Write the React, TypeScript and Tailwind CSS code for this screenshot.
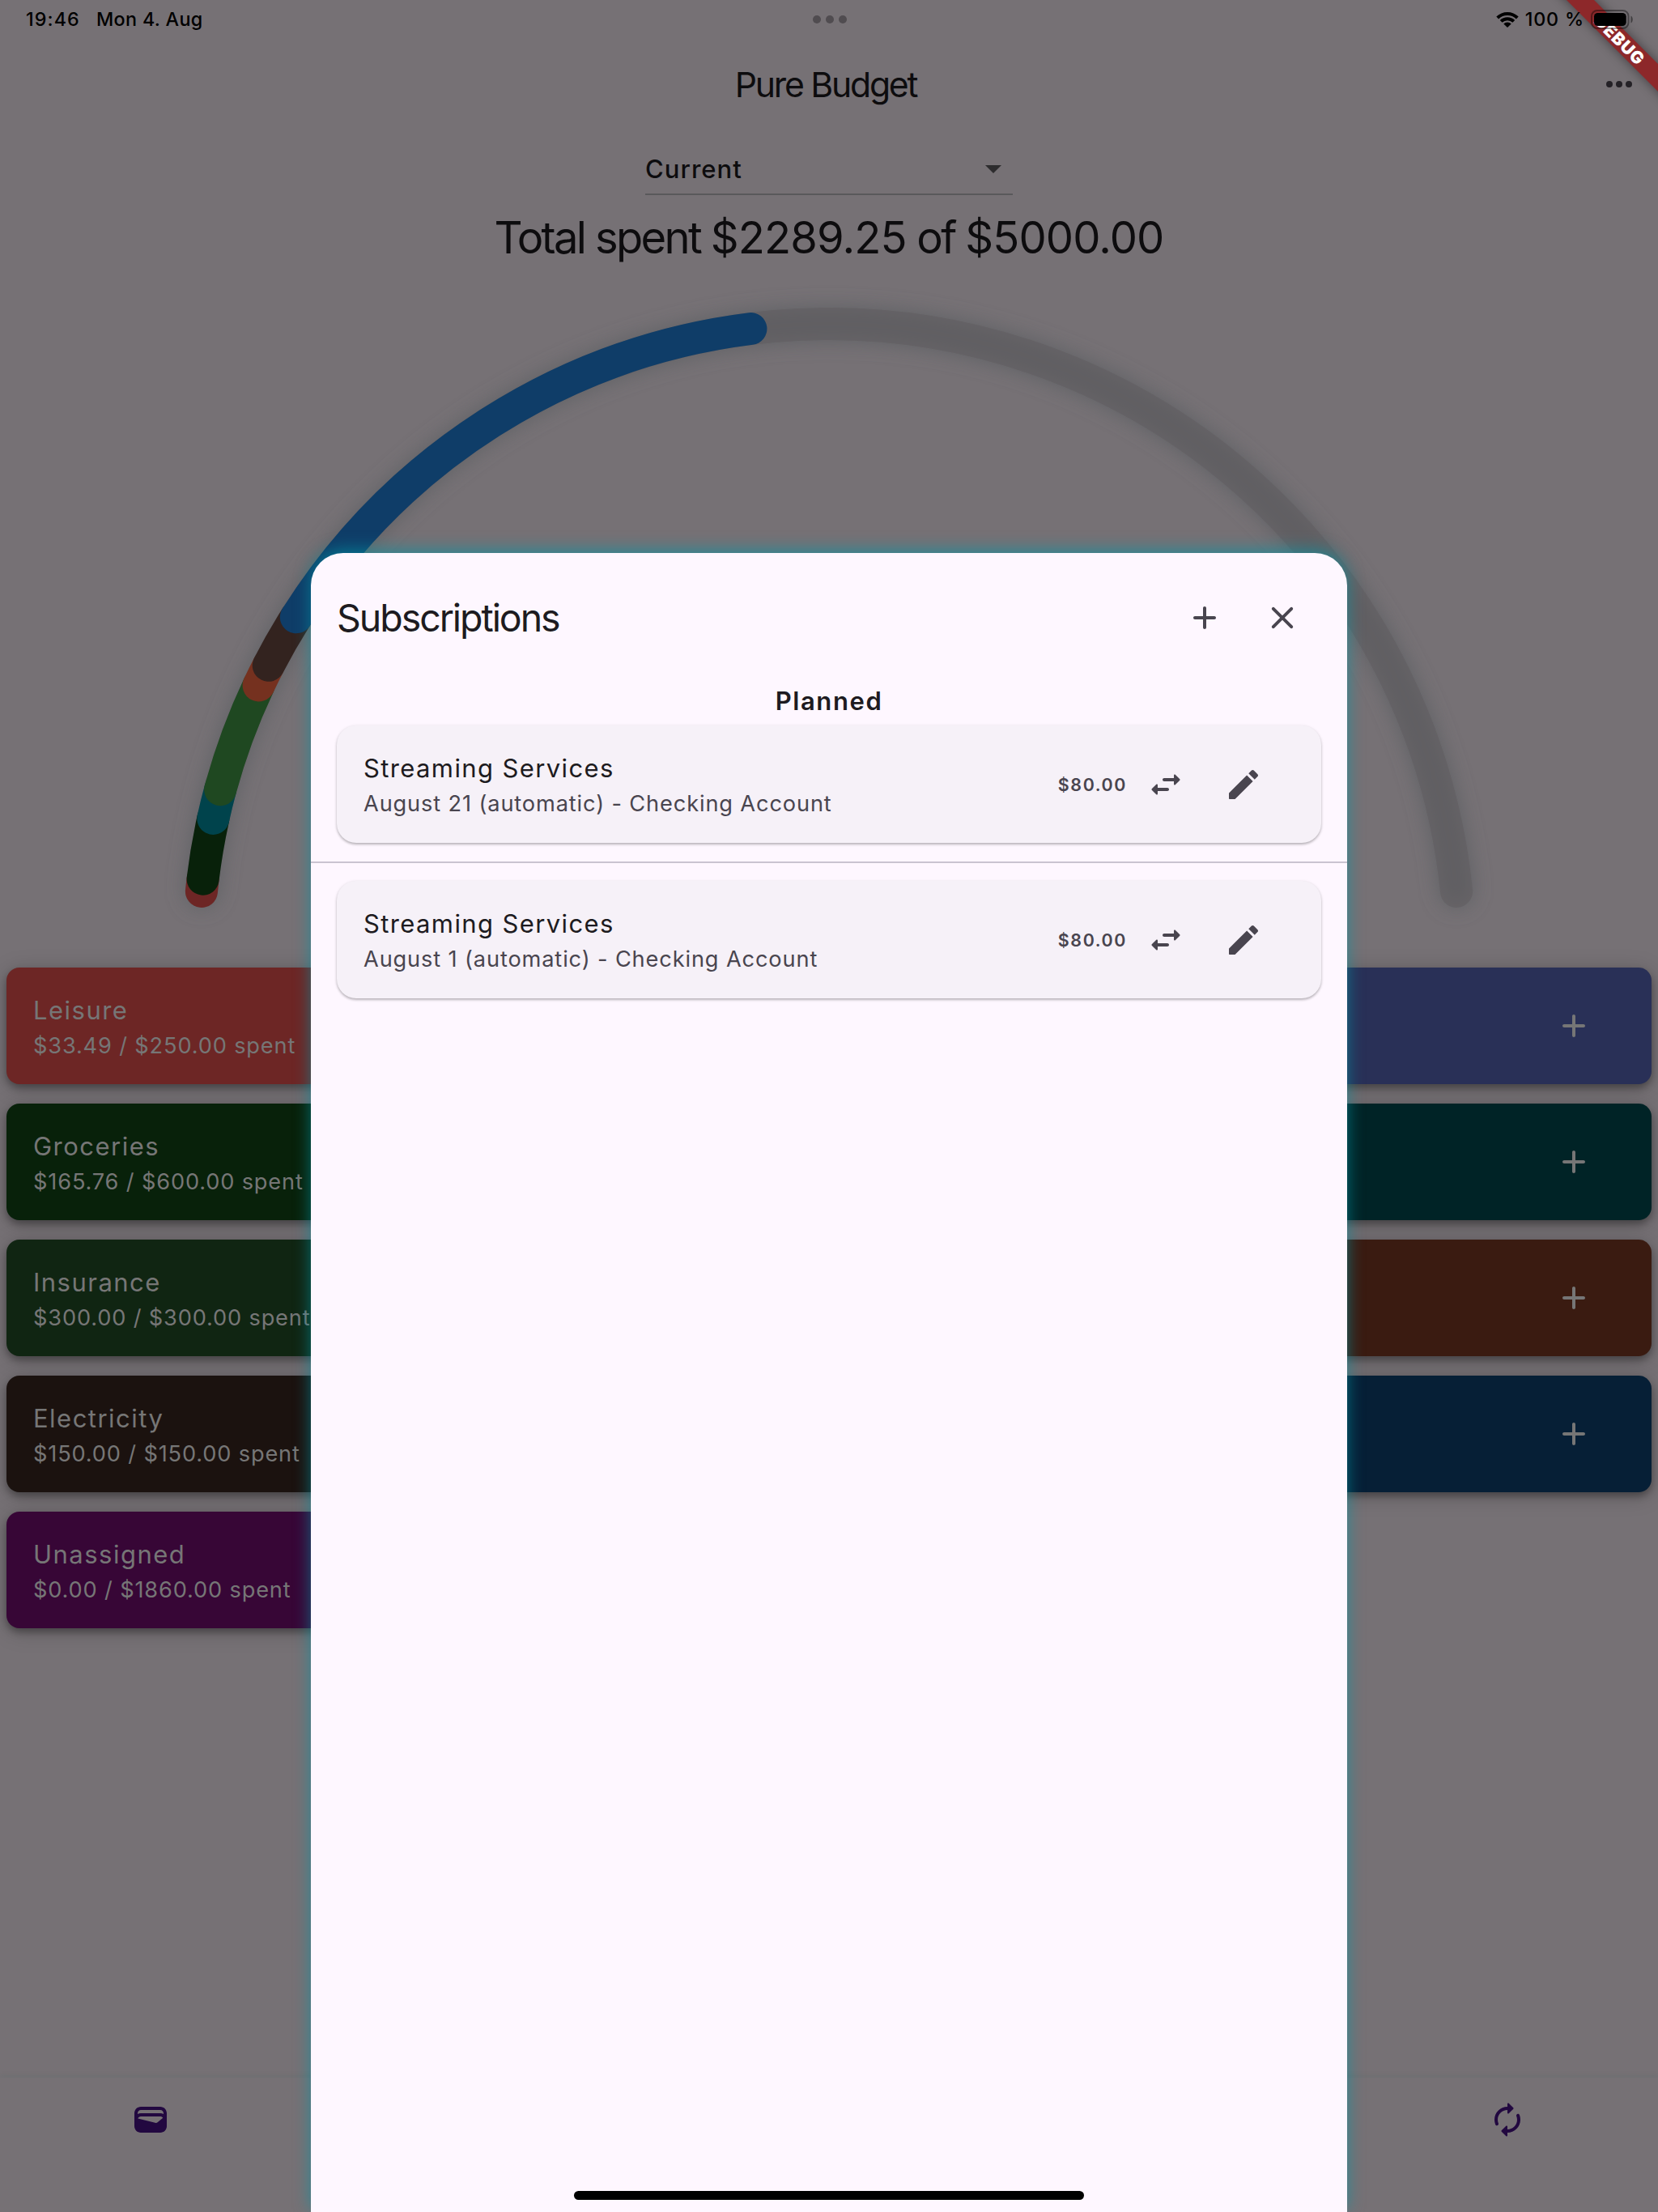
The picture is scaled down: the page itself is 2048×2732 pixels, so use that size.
import type { ReactNode } from "react";

const CX = 1024;
const CY = 1179;
const R = 779;

function polar(deg: number) {
  const a = (deg * Math.PI) / 180;
  return `${(CX - R * Math.cos(a)).toFixed(2)} ${(CY - R * Math.sin(a)).toFixed(2)}`;
}

function arc(from: number, to: number) {
  return `M${polar(from)} A${R} ${R} 0 0 1 ${polar(to)}`;
}

const segments = [
  { from: 5.75, to: 6.88, color: "#6d2625" },
  { from: 6.88, to: 12.46, color: "#08210a" },
  { from: 12.46, to: 15.16, color: "#00434c" },
  { from: 15.16, to: 25.27, color: "#1f4821" },
  { from: 25.27, to: 27.29, color: "#75311f" },
  { from: 27.29, to: 32.34, color: "#33231f" },
  { from: 32.34, to: 82.88, color: "#0f3d68" },
];

const budgets = [
  { name: "Leisure", detail: "$33.49 / $250.00 spent", bg: "bg-[#6d2625]" },
  { name: "", detail: "", bg: "bg-[#293057]" },
  { name: "Groceries", detail: "$165.76 / $600.00 spent", bg: "bg-[#08210a]" },
  { name: "", detail: "", bg: "bg-[#002326]" },
  { name: "Insurance", detail: "$300.00 / $300.00 spent", bg: "bg-[#102512]" },
  { name: "", detail: "", bg: "bg-[#3a1b11]" },
  { name: "Electricity", detail: "$150.00 / $150.00 spent", bg: "bg-[#1b120f]" },
  { name: "", detail: "", bg: "bg-[#061f36]" },
  { name: "Unassigned", detail: "$0.00 / $1860.00 spent", bg: "bg-[#370636]" },
];

const subscriptions = [
  { name: "Streaming Services", detail: "August 21 (automatic) - Checking Account", amount: "$80.00" },
  { name: "Streaming Services", detail: "August 1 (automatic) - Checking Account", amount: "$80.00" },
];

function Icon({ d, className = "" }: { d: string; className?: string }) {
  return (
    <svg viewBox="0 0 24 24" className={`size-12 shrink-0 fill-current ${className}`}>
      <path d={d} />
    </svg>
  );
}

function IconButton({ children }: { children: ReactNode }) {
  return <button className="flex size-24 shrink-0 items-center justify-center">{children}</button>;
}

const ADD =
  "M18 13h-5v5c0 .55-.45 1-1 1s-1-.45-1-1v-5H6c-.55 0-1-.45-1-1s.45-1 1-1h5V6c0-.55.45-1 1-1s1 .45 1 1v5h5c.55 0 1 .45 1 1s-.45 1-1 1z";
const CLOSE =
  "M18.3 5.71c-.39-.39-1.02-.39-1.41 0L12 10.59 7.11 5.7c-.39-.39-1.02-.39-1.41 0-.39.39-.39 1.02 0 1.41L10.59 12 5.7 16.89c-.39.39-.39 1.02 0 1.41.39.39 1.02.39 1.41 0L12 13.41l4.89 4.89c.39.39 1.02.39 1.41 0 .39-.39.39-1.02 0-1.41L13.41 12l4.89-4.89c.38-.38.38-1.02 0-1.4z";
const SWAP =
  "M6.14 11.86l-2.78 2.79c-.19.2-.19.51 0 .71l2.78 2.79c.31.32.85.09.85-.35V16H13c.55 0 1-.45 1-1s-.45-1-1-1H6.99v-1.79c0-.45-.54-.67-.85-.35zm14.51-3.21l-2.78-2.79c-.31-.32-.85-.09-.85.35V8H11c-.55 0-1 .45-1 1s.45 1 1 1h6.01v1.79c0 .45.54.67.85.35l2.78-2.79c.2-.19.2-.51.01-.7z";
const EDIT =
  "M3 17.46v3.04c0 .28.22.5.5.5h3.04c.13 0 .26-.05.35-.15L17.81 9.94l-3.75-3.75L3.15 17.1c-.1.1-.15.22-.15.36zM20.71 7.04c.39-.39.39-1.02 0-1.41l-2.34-2.34c-.39-.39-1.02-.39-1.41 0l-1.83 1.83 3.75 3.75 1.83-1.83z";
const RENEW =
  "M12 6v1.79c0 .45.54.67.85.35l2.79-2.79c.2-.2.2-.51 0-.71l-2.79-2.79c-.31-.31-.85-.09-.85.36V4c-4.42 0-8 3.58-8 8 0 1.04.2 2.04.57 2.95.27.67 1.13.85 1.64.34.27-.27.38-.68.23-1.04C6.15 13.56 6 12.79 6 12c0-3.31 2.69-6 6-6zm5.79 2.71c-.27.27-.38.69-.23 1.04.28.7.44 1.46.44 2.25 0 3.31-2.69 6-6 6v-1.79c0-.45-.54-.67-.85-.35l-2.79 2.79c-.2.2-.2.51 0 .71l2.79 2.79c.31.31.85.09.85-.35V20c4.42 0 8-3.58 8-8 0-1.04-.2-2.04-.57-2.95-.27-.67-1.13-.85-1.64-.34z";
const WALLET =
  "M18 4H6C3.79 4 2 5.79 2 8v8c0 2.21 1.79 4 4 4h12c2.21 0 4-1.79 4-4V8c0-2.21-1.79-4-4-4zm-1.86 9.77c-.24.2-.57.28-.88.2L4.15 11.25C4.45 10.52 5.16 10 6 10h12c.67 0 1.26.34 1.63.84l-3.49 2.93zM6 6h12c1.1 0 2 .9 2 2v.55c-.59-.34-1.27-.55-2-.55H6c-.73 0-1.41.21-2 .55V8c0-1.1.9-2 2-2z";

function StatusBar() {
  return (
    <div className="relative z-20 flex h-12 items-center pl-8 pr-[30px] text-[23.3px] font-medium text-black">
      <div className="flex flex-1 items-center">
        <span className="w-[87px] tracking-[1.1px]">19:46</span>
        <span className="tracking-[0.35px]">Mon 4. Aug</span>
      </div>
      <div className="flex gap-1.5">
        <i className="size-2.5 rounded-full bg-[#504c50]" />
        <i className="size-2.5 rounded-full bg-[#504c50]" />
        <i className="size-2.5 rounded-full bg-[#504c50]" />
      </div>
      <div className="flex flex-1 items-center justify-end">
        <svg viewBox="0 0 28 20" className="h-5 w-7">
          <path d="M1.7 8A17.6 17.6 0 0 1 26.3 8" fill="none" stroke="#000" strokeWidth="4" />
          <path d="M6.2 12.4A11.2 11.2 0 0 1 21.8 12.4" fill="none" stroke="#000" strokeWidth="4" />
          <path d="M9.3 15.4A6.7 6.7 0 0 1 18.7 15.4L14 20Z" />
        </svg>
        <span className="ml-2 tracking-[0.85px]">100 %</span>
        <svg viewBox="0 0 53 24" className="ml-2 h-6 w-[53px]">
          <rect x="1" y="1" width="45.5" height="22" rx="7" fill="none" stroke="#000" strokeOpacity=".4" strokeWidth="2" />
          <rect x="4" y="4" width="39.7" height="16" rx="4.5" />
          <path d="M49.5 7.5c3 1.6 3 7.400 0 9z" fillOpacity=".45" />
        </svg>
      </div>
    </div>
  );
}

function DebugBanner() {
  return (
    <div className="absolute right-0 top-0 z-10 size-52 overflow-hidden">
      <div className="absolute left-[20px] top-[36px] flex h-6 w-[280px] rotate-45 items-center justify-center bg-[#8d282a] pl-[3px] text-[21px] font-black leading-none tracking-[0.9px] text-white shadow-[0_0_14px_rgba(0,0,0,0.45)]">
        DEBUG
      </div>
    </div>
  );
}

function Gauge() {
  return (
    <svg viewBox="0 343 2048 852" className="block h-[852px] w-full shrink-0">
      <defs>
        <filter id="halo" filterUnits="userSpaceOnUse" x="150" y="300" width="1750" height="900">
          <feGaussianBlur stdDeviation="13" />
        </filter>
      </defs>
      <g fill="none" strokeLinecap="round" strokeWidth="40">
        <path d={arc(5.75, 174.25)} stroke="#5b5e60" strokeOpacity=".85" filter="url(#halo)" />
        <path d={arc(5.75, 174.25)} stroke="#605e61" strokeOpacity=".6" />
        {segments.map((s) => (
          <path key={s.color} d={arc(s.from, s.to)} stroke={s.color} />
        ))}
      </g>
    </svg>
  );
}

function BudgetCard({ name, detail, bg }: { name: string; detail: string; bg: string }) {
  return (
    <div
      className={`flex h-36 items-center rounded-2xl pl-[33px] pr-12 text-[#767676] shadow-[0_5px_10px_rgba(0,0,0,0.32),0_4px_28px_rgba(0,0,0,0.18)] ${bg}`}
    >
      <div className="flex-1 pt-0.5">
        <div className="text-[31px] leading-[48px] tracking-[1.48px]">{name}</div>
        <div className="text-[27.2px] leading-[40px] tracking-[0.84px]">{detail}</div>
      </div>
      <IconButton>
        <Icon d={ADD} />
      </IconButton>
    </div>
  );
}

function SubscriptionCard({ name, detail, amount }: { name: string; detail: string; amount: string }) {
  return (
    <div className="mx-8 flex h-[145px] items-center rounded-3xl bg-[#f6f1f8] pl-[33px] pr-12 text-[#49454f] shadow-[0_2px_3px_rgba(0,0,0,0.22),0_1px_4px_rgba(0,0,0,0.1)]">
      <div className="flex-1">
        <div className="text-[31px] leading-[48px] tracking-[1.38px] text-[#1d1b20]">{name}</div>
        <div className="text-[27.2px] leading-[40px] tracking-[0.87px]">{detail}</div>
      </div>
      <span className="pt-0.5 text-[21.4px] font-semibold tracking-[1.6px]">{amount}</span>
      <IconButton>
        <Icon d={SWAP} />
      </IconButton>
      <IconButton>
        <Icon d={EDIT} />
      </IconButton>
    </div>
  );
}

function SubscriptionsSheet() {
  return (
    <section className="absolute left-96 top-[683px] z-30 flex h-[2049px] w-[1280px] flex-col rounded-t-[40px] bg-[#fef7ff] shadow-[0_-4px_20px_rgba(0,151,167,0.66)]">
      <header className="mt-8 flex h-24 items-center pl-8 pr-8 text-[#49454f]">
        <h2 className="flex-1 pt-px text-[46.5px] tracking-[-2.05px] text-[#1d1b20]">Subscriptions</h2>
        <IconButton>
          <Icon d={ADD} />
        </IconButton>
        <IconButton>
          <Icon d={CLOSE} />
        </IconButton>
      </header>
      <h3 className="mb-[6px] mt-[31px] text-center text-[31px] font-semibold leading-[48px] tracking-[1.6px] text-[#1d1b20]">
        Planned
      </h3>
      <SubscriptionCard {...subscriptions[0]} />
      <hr className="mb-[22px] mt-[23px] border-t-2 border-[#cac4d0]" />
      <SubscriptionCard {...subscriptions[1]} />
      <div className="mx-auto mb-[15px] mt-auto h-[11px] w-[630px] rounded-full bg-black" />
    </section>
  );
}

export default function App() {
  return (
    <main className="relative flex h-[2732px] w-[2048px] flex-col overflow-hidden bg-[#767175] font-['Inter',sans-serif] text-[#0d0c0e]">
      <StatusBar />
      <DebugBanner />
      <header className="grid h-28 grid-cols-[1fr_auto_1fr] items-center px-6">
        <span />
        <h1 className="pr-2 pt-0.5 text-[42.7px] tracking-[-2.25px]">Pure Budget</h1>
        <Icon
          className="justify-self-end text-[#242126]"
          d="M4 12a2 2 0 1 0 4 0a2 2 0 1 0-4 0M10 12a2 2 0 1 0 4 0a2 2 0 1 0-4 0M16 12a2 2 0 1 0 4 0a2 2 0 1 0-4 0"
        />
      </header>
      <div className="mx-auto mt-4 flex h-[65px] w-[454px] items-center justify-between border-b-2 border-[#59595b]">
        <span className="pt-[3px] text-[31px] font-medium tracking-[1.05px]">Current</span>
        <Icon className="text-[#2d2c2e]" d="M7 10l5 5 5-5z" />
      </div>
      <p className="h-[102px] pt-px text-center text-[54.3px] leading-[102px] tracking-[-2.65px]">
        Total spent <span className="tracking-[-0.85px]">$2289.25</span> of{" "}
        <span className="tracking-[-0.85px]">$5000.00</span>
      </p>
      <Gauge />
      <div className="grid grid-cols-2 gap-x-4 gap-y-6 px-2">
        {budgets.map((b) => (
          <BudgetCard key={b.bg} {...b} />
        ))}
      </div>
      <nav className="mt-auto flex h-[166px] justify-between bg-[#767175] px-[162px] pt-7 text-[#220840] shadow-[0_-3px_4px_rgba(100,108,108,0.3)]">
        <Icon d={WALLET} />
        <Icon d={RENEW} />
      </nav>
      <SubscriptionsSheet />
    </main>
  );
}
